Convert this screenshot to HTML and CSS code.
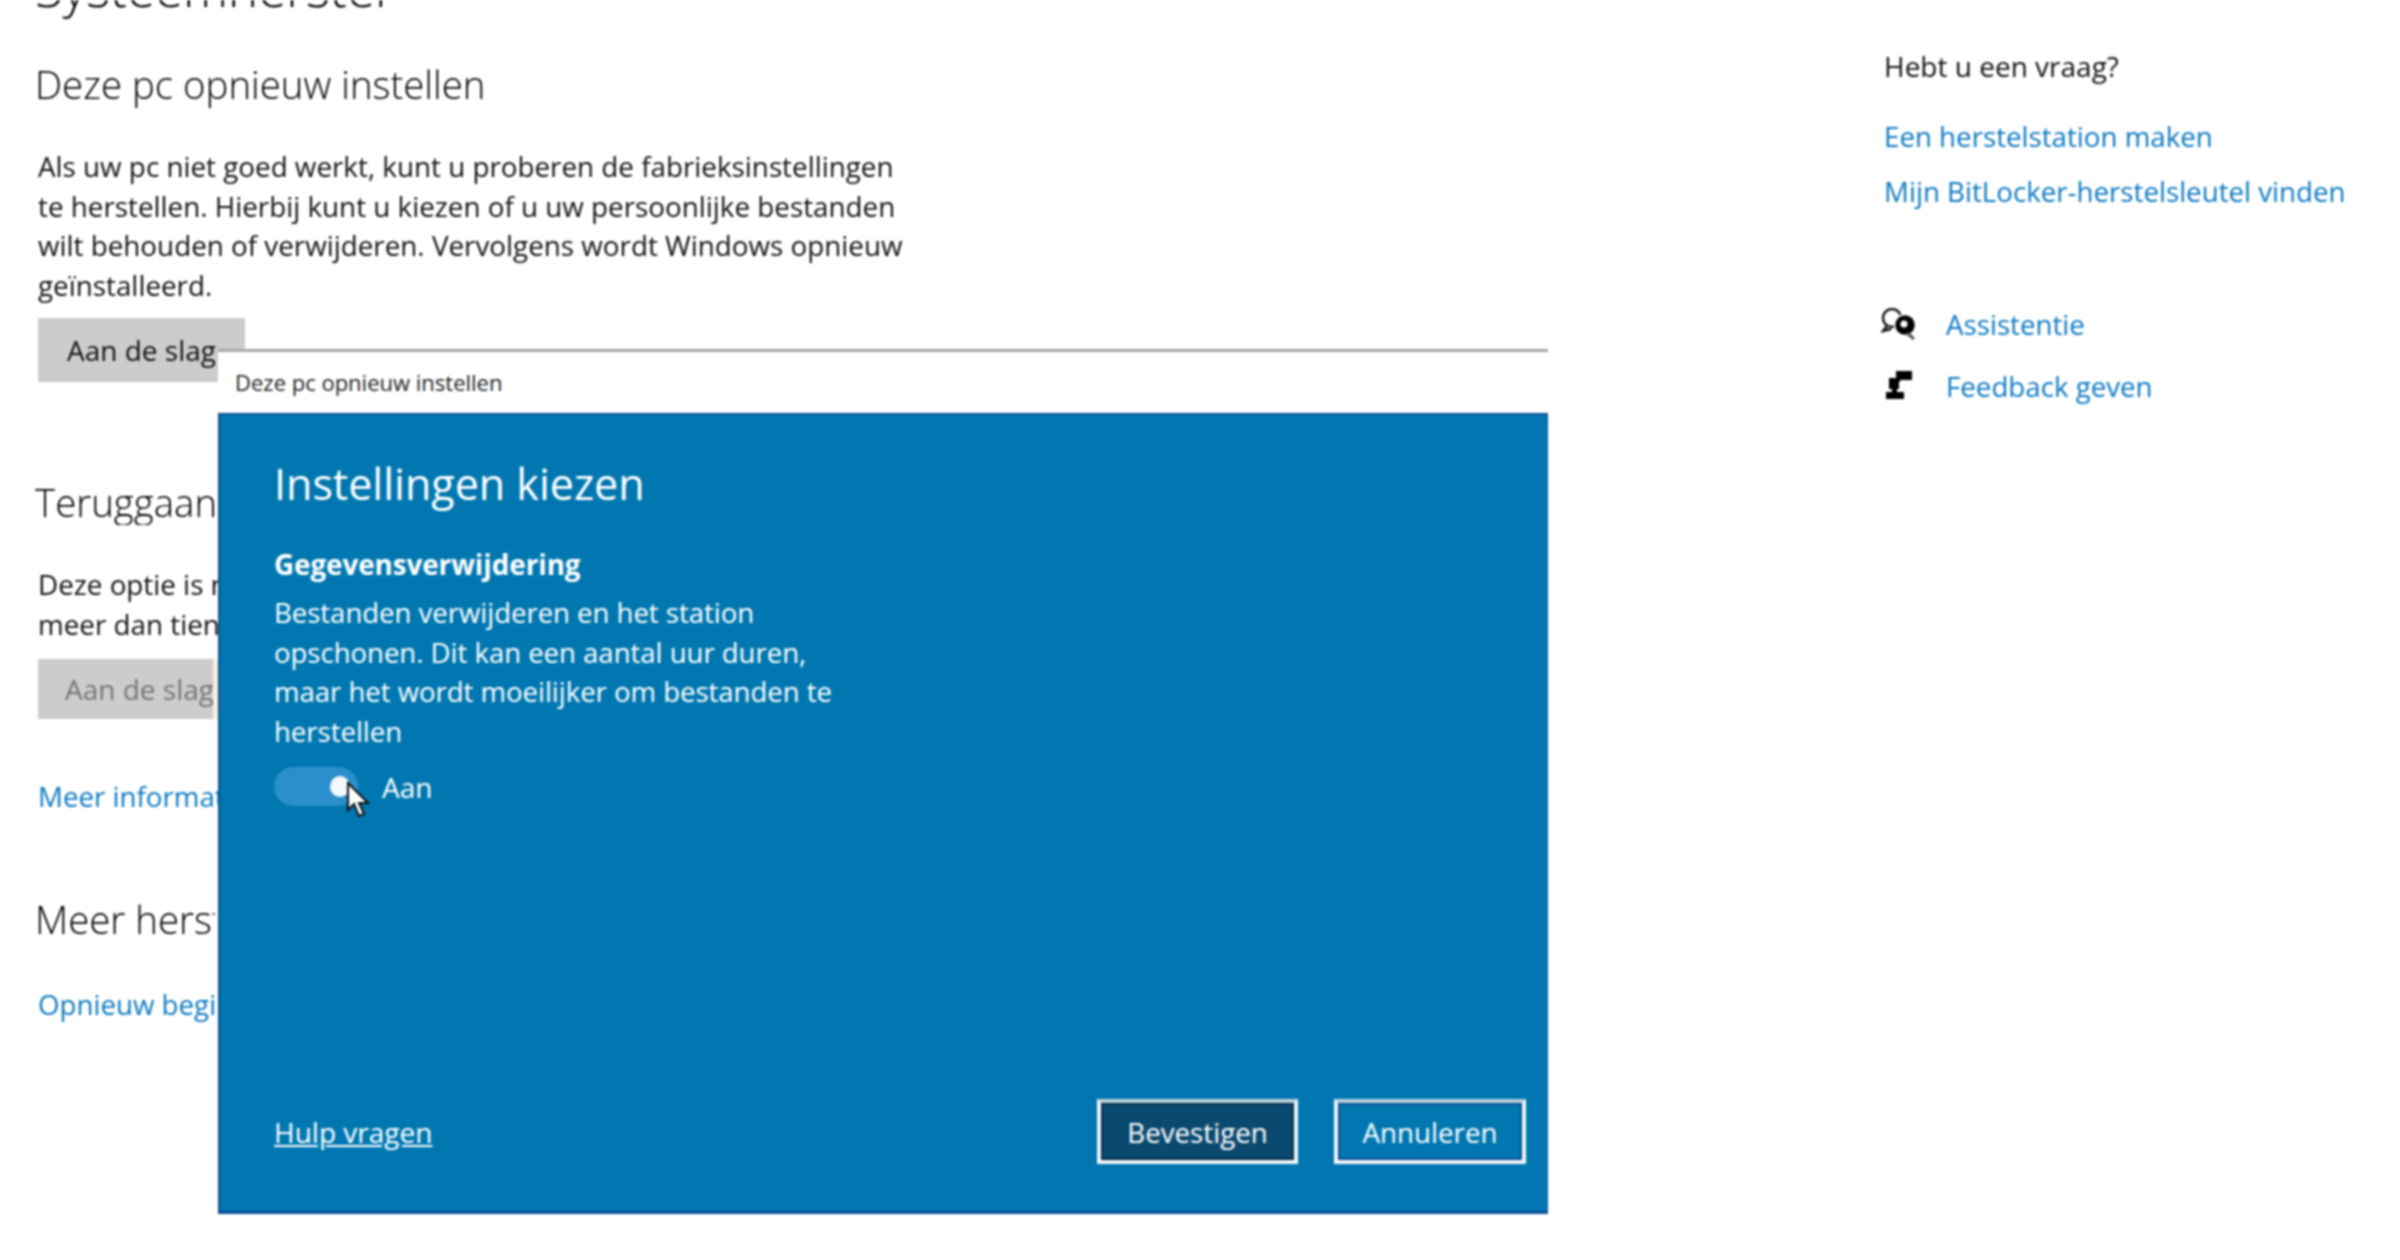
FILE: index.html
```html
<!DOCTYPE html>
<html lang="nl">
<head>
    <meta charset="UTF-8">
    <title>Systeemherstel</title>
    <link rel="stylesheet" href="styles.css">
</head>
<body>
    <div class="page">
        <!-- Recovery options -->
        <main class="recovery">
            <h1>Systeemherstel</h1>
            <h2>Deze pc opnieuw instellen</h2>
            <p class="intro">Als uw pc niet goed werkt, kunt u proberen de fabrieksinstellingen te herstellen. Hierbij kunt u kiezen of u uw persoonlijke bestanden wilt behouden of verwijderen. Vervolgens wordt Windows opnieuw geïnstalleerd.</p>
            <button class="action">Aan de slag</button>

            <h2 class="back-title behind">Teruggaan naar de vorige versie van Windows 10</h2>
            <p class="intro behind">Deze optie is niet meer beschikbaar, omdat deze pc is bijgewerkt<br>meer dan tien dagen geleden.</p>
            <button class="action disabled">Aan de slag</button>
            <a class="link more-info behind" href="#">Meer informatie</a>

            <h2 class="more-title behind">Meer herstelopties</h2>
            <a class="link restart behind" href="#">Opnieuw beginnen met een schone installatie van Windows</a>
        </main>

        <!-- Right hand help column -->
        <aside class="help">
            <div class="question">Hebt u een vraag?</div>
            <a class="link help-link" href="#">Een herstelstation maken</a>
            <a class="link help-link key" href="#">Mijn BitLocker-herstelsleutel vinden</a>

            <div class="help-row first">
                <svg class="help-icon" width="35" height="32" viewBox="0 0 35 32">
                    <circle cx="11" cy="10" r="9" fill="#fff" stroke="#111" stroke-width="2.4"/>
                    <path d="M6 18 L2 23 L10 21" fill="#fff" stroke="#111" stroke-width="2.4"/>
                    <circle cx="24" cy="17" r="10.5" fill="#000" stroke="#fff" stroke-width="1.5"/>
                    <circle cx="23" cy="16" r="3.5" fill="#fff"/>
                    <path d="M26 25 L33 31" stroke="#555" stroke-width="3"/>
                </svg>
                <a class="link" href="#">Assistentie</a>
            </div>
            <div class="help-row">
                <svg class="help-icon" width="35" height="32" viewBox="0 0 35 32">
                    <path fill="#000" d="M15 1 H31 V10 H20 L17 13 V8 H15Z"/>
                    <path fill="#000" d="M8 8 H18 V19 H16 V23 H11 V19 H8Z"/>
                    <path fill="#000" d="M5 22 H23 V29 H5Z"/>
                </svg>
                <a class="link" href="#">Feedback geven</a>
            </div>
        </aside>

        <!-- Reset dialog on top of the page -->
        <div class="dialog">
            <div class="dialog-title">Deze pc opnieuw instellen</div>
            <div class="dialog-body">
                <h3>Instellingen kiezen</h3>
                <div class="option-title">Gegevensverwijdering</div>
                <p class="option-text">Bestanden verwijderen en het station opschonen. Dit kan een aantal uur duren, maar het wordt moeilijker om bestanden te herstellen</p>
                <div class="switch-row">
                    <div class="switch">
                        <div class="knob"></div>
                        <svg class="cursor" width="26" height="40" viewBox="0 0 26 40">
                            <path d="M2 2 V29 L8 23 L13 35 L18 33 L13 22 L22 22Z" fill="#fff" stroke="#111" stroke-width="2"/>
                        </svg>
                    </div>
                    <span>Aan</span>
                </div>
                <div class="dialog-footer">
                    <a class="help-me" href="#">Hulp vragen</a>
                    <div class="buttons">
                        <button class="dialog-button primary">Bevestigen</button>
                        <button class="dialog-button">Annuleren</button>
                    </div>
                </div>
            </div>
        </div>
    </div>
</body>
</html>
```

FILE: styles.css
```css
* {
    margin: 0;
    padding: 0;
    box-sizing: border-box;
}

html, body {
    height: 100%;
    overflow: hidden;
    background-color: #fff;
}

body {
    font-family: "Open Sans", "Noto Sans", sans-serif;
    color: #111;
}

.page {
    position: relative;
    display: flex;
    width: 2400px;
    height: 1260px;
    overflow: hidden;
    filter: blur(0.9px);
}

.recovery {
    width: 1884px;
    margin-top: -44px;
    padding-left: 35px;
    display: flex;
    flex-direction: column;
    align-items: flex-start;
}

h1 {
    font-size: 51px;
    line-height: 63px;
    font-weight: 300;
    color: #000;
    white-space: nowrap;
}

h2 {
    margin-top: 42px;
    font-size: 38.4px;
    line-height: 46px;
    font-weight: 300;
    color: #000;
    white-space: nowrap;
}

.back-title {
    margin-top: 97px;
}

.more-title {
    margin-top: 80px;
}

.intro {
    margin-top: 40px;
    margin-left: 3px;
    width: 880px;
    font-size: 27.8px;
    line-height: 39.5px;
}

/* text that runs on under the dialog */
.behind {
    width: 180px;
    overflow: hidden;
    white-space: nowrap;
}

.action {
    margin-top: 13px;
    margin-left: 3px;
    width: 207px;
    height: 64px;
    background-color: #ccc;
    border: none;
    font-family: inherit;
    font-size: 28px;
    color: #111;
    text-align: center;
    white-space: nowrap;
}

.action.disabled {
    margin-top: 15px;
    height: 60px;
    width: 180px;
    text-align: left;
    padding-left: 27px;
    color: #767676;
    border-right: 5px solid #fbeee2;
    overflow: hidden;
}

.link {
    display: block;
    font-size: 27.7px;
    line-height: 40px;
    color: #0a78c2;
    text-decoration: none;
    white-space: nowrap;
}

.more-info {
    margin-top: 57px;
    margin-left: 3px;
}

.restart {
    margin-top: 42px;
    margin-left: 3px;
}

.help {
    padding-top: 46px;
    flex: 1;
}

.question {
    font-size: 28px;
    line-height: 40px;
}

.help-link {
    margin-top: 30px;
}

.key {
    margin-top: 15px;
}

.help-row {
    display: flex;
    align-items: center;
    height: 40px;
    margin-top: 22px;
}

.help-row.first {
    margin-top: 93px;
}

.help-icon {
    margin-left: -3px;
    margin-right: 30px;
    flex: none;
}

.dialog {
    position: absolute;
    left: 218px;
    top: 349px;
    width: 1330px;
    height: 865px;
    display: flex;
    flex-direction: column;
    background-color: #fff;
    border-top: 3px solid #a6a6a6;
}

.dialog-title {
    height: 61px;
    padding-left: 17px;
    font-size: 22px;
    line-height: 61px;
    color: #222;
}

.dialog-body {
    flex: 1;
    display: flex;
    flex-direction: column;
    padding: 41px 21px 47px 54px;
    background-color: #0077b0;
    color: #fff;
    border: 2px solid #0b4f96;
    border-width: 2px 1px 3px 2px;
}

h3 {
    font-size: 43px;
    line-height: 56px;
    font-weight: 400;
}

.option-title {
    margin-top: 32px;
    font-size: 27.7px;
    line-height: 40px;
    font-weight: 700;
}

.option-text {
    margin-top: 9px;
    width: 580px;
    font-size: 27.5px;
    line-height: 39.5px;
}

.switch-row {
    display: flex;
    align-items: center;
    gap: 24px;
    margin-top: 16px;
    font-size: 28px;
}

.switch {
    position: relative;
    width: 84px;
    height: 39px;
    border-radius: 20px;
    background-color: #2a8fcb;
}

.knob {
    position: absolute;
    left: 56px;
    top: 9px;
    width: 20px;
    height: 21px;
    border-radius: 50%;
    background-color: #f4f8fb;
}

.cursor {
    position: absolute;
    left: 72px;
    top: 14px;
}

.dialog-footer {
    margin-top: auto;
    display: flex;
    align-items: center;
    justify-content: space-between;
}

.help-me {
    font-size: 28px;
    color: #fff;
}

.buttons {
    display: flex;
    gap: 36px;
}

.dialog-button {
    width: 192px;
    height: 65px;
    background-color: #0077b0;
    border: 4px solid #f2f6f8;
    border-top-color: #b9cfdc;
    box-shadow: inset 0 0 0 2px #0b4f96;
    color: #fff;
    font-family: inherit;
    font-size: 27.7px;
}

.dialog-button.primary {
    width: 201px;
    background-color: #0b4a70;
    box-shadow: inset 0 0 0 2px #04304f;
}
```
